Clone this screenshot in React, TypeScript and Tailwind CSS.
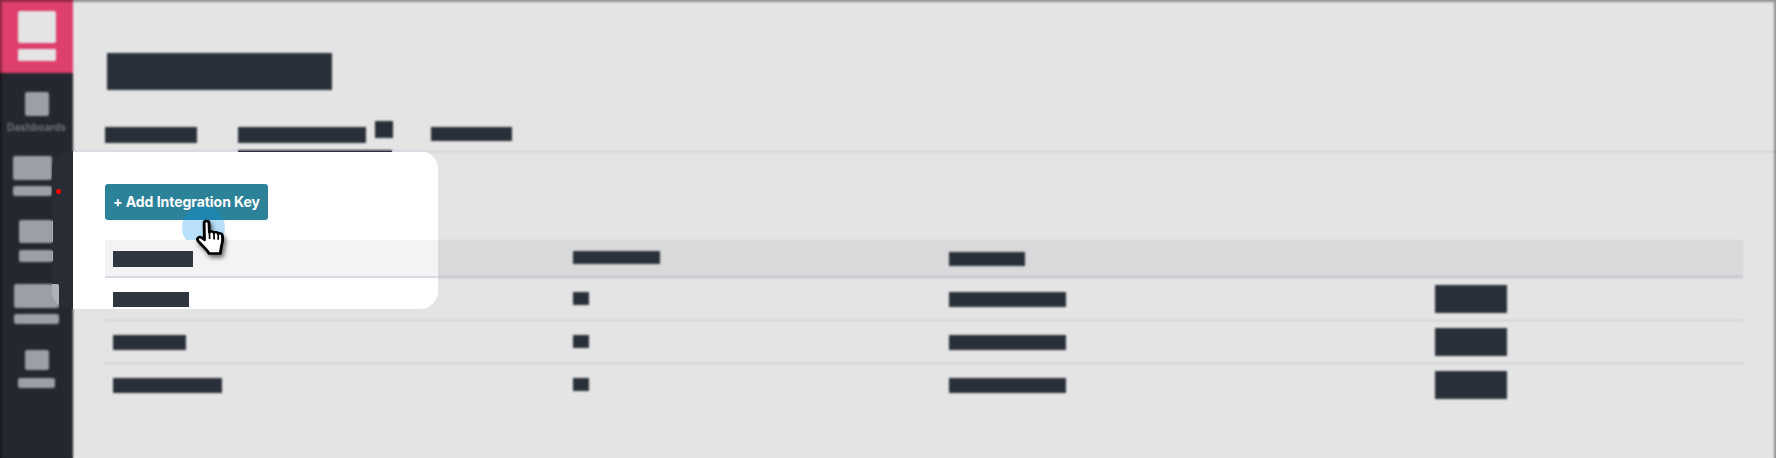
const bar = "bg-[#2f3640]";
const icon = "bg-[#b0b2ba] rounded-[2px]";

function Sidebar() {
  return (
    <aside className="w-[73px] shrink-0 bg-[#292c34] flex flex-col items-center">
      <div className="w-full h-[73px] bg-[#f9477a] flex flex-col items-center pt-[11px]">
        <div className="w-[38px] h-[32px] bg-white rounded-[2px]" />
        <div className="w-[38px] h-[12px] mt-[6px] bg-white rounded-[1px]" />
      </div>
      <div className="mt-[19px] flex flex-col items-center">
        <div className={`w-[24px] h-[24px] ${icon}`} />
        <span className="mt-[5px] text-[10px] leading-[12px] font-bold text-[#7d7f86] blur-[0.4px]">Dashboards</span>
      </div>
      <div className="relative mt-[23px] mr-[8px] flex flex-col items-center">
        <div className={`w-[39px] h-[24px] ${icon}`} />
        <div className={`w-[39px] h-[10px] mt-[6px] ${icon}`} />
        <span className="absolute left-[43px] top-[33px] w-[5px] h-[5px] rounded-full bg-[#ff0000]" />
      </div>
      <div className="mt-[24px] mr-[1px] flex flex-col items-center">
        <div className={`w-[34px] h-[23px] ${icon}`} />
        <div className={`w-[34px] h-[12px] mt-[7px] ${icon}`} />
      </div>
      <div className="mt-[22px] flex flex-col items-center">
        <div className={`w-[45px] h-[24px] ${icon}`} />
        <div className={`w-[45px] h-[10px] mt-[6px] ${icon}`} />
      </div>
      <div className="mt-[26px] flex flex-col items-center">
        <div className={`w-[24px] h-[20px] ${icon}`} />
        <div className={`w-[37px] h-[10px] mt-[8px] ${icon}`} />
      </div>
    </aside>
  );
}

function Tabs() {
  return (
    <div className="mt-[31px] h-[31px] pl-[32px] flex items-start border-b border-[#d8dae6]">
      <div className={`w-[92px] h-[16px] mt-[6px] shrink-0 ${bar}`} />
      <div className="ml-[41px] w-[154px] h-[31px] shrink-0 flex items-start border-b-2 border-[#2b2d42]">
        <div className={`w-[128px] h-[16px] mt-[6px] shrink-0 ${bar}`} />
        <div className={`w-[18px] h-[17px] ml-[9px] shrink-0 ${bar}`} />
      </div>
      <div className={`ml-[39px] w-[81px] h-[14px] mt-[6px] shrink-0 ${bar}`} />
    </div>
  );
}

const grid = "grid grid-cols-[460px_376px_486px_1fr]";

function Row({ name, last }: { name: string; last?: boolean }) {
  return (
    <div className={`${grid} h-[43px] ${last ? "" : "border-b border-[#d8dae6]"}`}>
      <div className={`ml-2 mt-[14px] h-[15px] ${name} ${bar}`} />
      <div className={`ml-2 mt-[14px] h-[13px] w-[16px] ${bar}`} />
      <div className={`ml-2 mt-[14px] h-[15px] w-[117px] ${bar}`} />
      <div className={`ml-2 mt-[7px] h-[28px] w-[72px] ${bar}`} />
    </div>
  );
}

function Table() {
  return (
    <div className="relative mt-[20px]">
      <div className={`${grid} h-[38px] bg-[#f3f3f6] border-b-2 border-[#d8dae6]`}>
        <div className={`ml-2 mt-[11px] h-[16px] w-[80px] ${bar}`} />
        <div className={`ml-2 mt-[11px] h-[13px] w-[87px] ${bar}`} />
        <div className={`ml-2 mt-[12px] h-[14px] w-[76px] ${bar}`} />
        <div />
      </div>
      <Row name="w-[76px]" />
      <Row name="w-[73px]" />
      <Row name="w-[109px]" last />
    </div>
  );
}

function Hand() {
  return (
    <svg
      viewBox="0 0 25 38"
      preserveAspectRatio="none"
      className="absolute left-[90px] top-[35px] z-10 w-[30px] h-[38px] drop-shadow-[2px_3px_2px_rgba(0,0,0,0.55)]"
    >
      <path
        d="M7.6 4c0-2.6 4-2.6 4.1 0l.3 9.4c.9-1.5 3.4-1.3 3.7.5.9-1.3 3.3-1 3.6.8 1-.9 3.1-.5 3.4 1.3.5 3.2.4 7.2-.5 10.1L21 34.5H11.6C10.4 30.6 6.4 27.6 2.6 22 1 19.4 3.4 17 5.6 18.7l2.3 2.2Z"
        fill="#fff"
        stroke="#000"
        strokeWidth="2.4"
        strokeLinejoin="round"
      />
      <path d="M12 13.4l.2 6M15.8 14l.1 6M19.4 14.8l-.1 5.4" fill="none" stroke="#000" strokeWidth="1.4" strokeLinecap="round" />
    </svg>
  );
}

function Main() {
  return (
    <main className="flex-1 min-w-0 bg-white flex flex-col">
      <div className="pl-[34px] pt-[53px]">
        <div className={`w-[225px] h-[37px] ${bar}`} />
      </div>
      <Tabs />
      <div className="pl-[32px] pr-[33px]">
        <div className="relative mt-[32px] w-[163px] h-[36px]">
          <button className="w-full h-full rounded-[3px] bg-[#2b8299] text-white text-[14px] leading-[36px] font-bold tracking-[-0.05px] text-center whitespace-nowrap">
            + Add Integration Key
          </button>
          <span className="absolute left-[77px] top-[22px] w-[43px] h-[43px] rounded-full bg-[#008fef]/28" />
          <Hand />
        </div>
        <Table />
      </div>
    </main>
  );
}

export default function App() {
  return (
    <div className="relative w-[1776px] h-[458px] overflow-hidden flex font-['Inter',sans-serif]">
      <Sidebar />
      <Main />
      <div className="absolute inset-0 border-t-2 border-x-2 border-black/35 pointer-events-none" />
      <div className="absolute inset-0 z-20 bg-black/[0.105] backdrop-blur-[1px] pointer-events-none [clip-path:path(evenodd,'M0_0H1776V458H0ZM70_151H420a18_18_0_0_1_18_18V291a18_18_0_0_1-18_18H70a18_18_0_0_1-18-18V169a18_18_0_0_1_18-18Z')]" />
    </div>
  );
}
